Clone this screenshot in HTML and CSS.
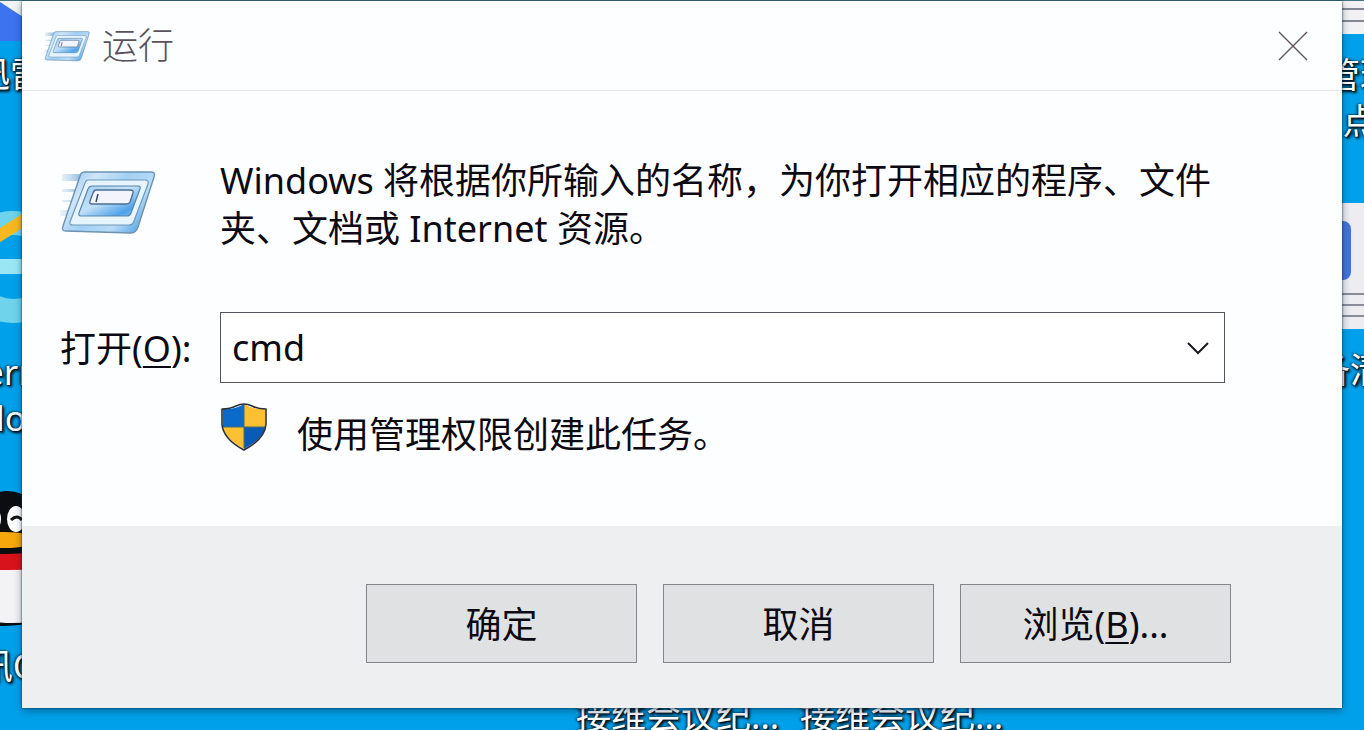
FILE: index.html
```html
<!DOCTYPE html>
<html lang="zh-CN">
<head>
  <meta charset="UTF-8" />
  <meta name="viewport" content="width=device-width, initial-scale=1.0"/>
  <title>运行</title>
  <link rel="stylesheet" href="styles.css">
</head>
<body>
  <!-- shared "run" icon -->
  <svg class="defs" width="0" height="0" aria-hidden="true">
    <defs>
      <linearGradient id="frame" x1="0" y1="0" x2="1" y2="0.6">
        <stop offset="0" stop-color="#86bfea"/>
        <stop offset="0.3" stop-color="#cfe6f9"/>
        <stop offset="0.55" stop-color="#a2d0f4"/>
        <stop offset="0.8" stop-color="#b9dcf7"/>
        <stop offset="1" stop-color="#6bb0e6"/>
      </linearGradient>
      <linearGradient id="screen" x1="0" y1="0" x2="1" y2="1">
        <stop offset="0" stop-color="#9fcdf2"/>
        <stop offset="0.45" stop-color="#c3e1f8"/>
        <stop offset="0.8" stop-color="#4ea2e8"/>
        <stop offset="1" stop-color="#8ac4f2"/>
      </linearGradient>
      <linearGradient id="speed" x1="0" y1="0" x2="1" y2="0">
        <stop offset="0" stop-color="#a9cde6" stop-opacity="0.2"/>
        <stop offset="1" stop-color="#7fb2d8"/>
      </linearGradient>
      <symbol id="run" viewBox="0 0 96 66">
        <path fill="url(#speed)" d="M2 5h22l-3 7H2zM2 20h16l-1 3H2zM2 31h12l-1 2H2zM0 41h10l-2 6H0z"/>
        <path fill="url(#frame)" stroke="#6b93b0" stroke-width="1.4" d="M25 3h66q5 0 3 5L78 58q-2 6-7 6L6 62q-5 0-3-5L20 7q1-4 5-4z"/>
        <path fill="#e6f4fe" stroke="#6f99b8" stroke-width="1.2" d="M28 11h57q4 0 3 4L74 52q-1 4-5 4H13q-4 0-3-3l15-39q1-3 3-3z"/>
        <path fill="url(#screen)" stroke="#5a86a9" stroke-width="1.2" d="M32 17h46q3 0 2 3L71 44q-1 3-4 3H21q-3 0-2-3l9-24q1-3 4-3z"/>
        <path fill="#f3f4fc" stroke="#4c6f92" stroke-width="1.4" d="M36 21h34q4 0 3 3l-3 9q-1 2-4 2H32q-3 0-2-3l3-8q1-3 3-3z"/>
        <path fill="none" stroke="#33415c" stroke-width="1.4" d="M38 25l-2 8"/>
      </symbol>
    </defs>
  </svg>

  <div class="desktop">
    <div class="shortcut xunlei">
      <svg width="60" height="52" viewBox="0 0 60 52" aria-hidden="true"><path fill="#f1f3f4" d="M0 0h60v52H0z"/><path fill="#3d73ee" d="M0 0l20 13 40 26v13H0z"/></svg>
      <span>迅雷</span>
    </div>
    <div class="shortcut ie">
      <svg width="120" height="130" viewBox="0 0 120 130" aria-hidden="true">
        <circle cx="68" cy="66" r="44" fill="none" stroke="#6fd3ec" stroke-width="24"/>
        <path fill="#9be6f5" d="M18 58h90v15H18z"/>
        <path fill="none" stroke="#f9b81f" stroke-width="12" d="M30 50Q62 30 108 0"/>
      </svg>
      <span>Internet<br>Explorer</span>
    </div>
    <div class="shortcut qq">
      <svg width="100" height="140" viewBox="0 0 100 140" aria-hidden="true">
        <ellipse cx="52" cy="46" rx="40" ry="44" fill="#0b0d10"/>
        <path fill="#0b0d10" d="M8 60h88l4 66q-50 22-100 0z"/>
        <path fill="#f3f3f5" d="M16 66h84v62q-44 12-84 0z"/>
        <ellipse cx="37" cy="30" rx="9" ry="13" fill="#fff"/>
        <ellipse cx="61" cy="30" rx="9" ry="13" fill="#fff"/>
        <path fill="none" stroke="#111" stroke-width="3" d="M56 31q6-6 11 0"/>
        <ellipse cx="50" cy="51" rx="30" ry="8" fill="#f6a70c"/>
        <path fill="#d9131b" d="M8 62q42 6 88 0v18q-44 2-88 0z"/>
      </svg>
      <span>腾讯QQ</span>
    </div>
    <div class="shortcut manage">
      <svg width="60" height="33" viewBox="0 0 60 33" aria-hidden="true"><path fill="#f2f2f4" d="M0 0h60v33H0z"/><path stroke="#858991" stroke-width="2" d="M0 8h60M0 20h60"/></svg>
      <span>管理<br>点</span>
    </div>
    <div class="shortcut list">
      <svg width="60" height="126" viewBox="0 0 60 126" aria-hidden="true">
        <path fill="#ececf1" d="M0 0h60v126H0z"/>
        <rect x="-20" y="18" width="51" height="59" rx="8" fill="#4374da"/>
        <path stroke="#8a8d98" stroke-width="2" d="M0 91h60M0 102h60M0 113h60"/>
      </svg>
      <span>设备清单</span>
    </div>
    <div class="shortcut note-one"><span>接维会议纪...</span></div>
    <div class="shortcut note-two"><span>接维会议纪...</span></div>
  </div>

  <form class="dialog" role="dialog" aria-labelledby="title">
    <header class="titlebar">
      <svg class="small-icon" aria-hidden="true"><use href="#run"/></svg>
      <h1 id="title">运行</h1>
      <button type="button" class="close" aria-label="关闭">
        <svg width="30" height="30" viewBox="0 0 30 30" aria-hidden="true"><path stroke="#5c5560" stroke-width="1.4" d="M1 1l28 28M29 1L1 29"/></svg>
      </button>
    </header>

    <main class="content">
      <svg class="large-icon" aria-hidden="true"><use href="#run"/></svg>
      <p>Windows 将根据你所输入的名称，为你打开相应的程序、文件夹、文档或 Internet 资源。</p>

      <label for="command">打开(<u>O</u>):</label>
      <div class="combo">
        <input type="text" id="command" value="cmd">
        <button type="button" aria-label="历史记录">
          <svg width="24" height="14" viewBox="0 0 24 14" aria-hidden="true"><path fill="none" stroke="#1d1a22" stroke-width="2" d="M2 2l10 10L22 2"/></svg>
        </button>
      </div>

      <div class="admin">
        <svg width="46" height="48" viewBox="0 0 46 48" aria-hidden="true">
          <path fill="#0b6bcb" d="M2 6q12 1 21-5v23H2z"/>
          <path fill="#fcc132" d="M23 1q9 6 21 5v18H23z"/>
          <path fill="#fcc132" d="M2 24h21v22Q4 36 2 24z"/>
          <path fill="#0a5bb8" d="M23 24h21q-2 12-21 22z"/>
          <path stroke="#4f6b62" stroke-width="1" d="M23 2v43M2 24h42"/>
          <path fill="none" stroke="#27303a" stroke-width="1.6" stroke-linejoin="round" d="M1 6q8 0 14-3 8-4 16 0 6 3 14 3v15q-1 15-22 26Q2 36 1 21z"/>
        </svg>
        <span>使用管理权限创建此任务。</span>
      </div>
    </main>

    <footer class="actions">
      <button type="submit">确定</button>
      <button type="button">取消</button>
      <button type="button">浏览(<u>B</u>)...</button>
    </footer>
  </form>
</body>
</html>
```

FILE: styles.css
```css
:root {
  --desktop: #00a1ea;
  --window: #fdfeff;
  --footer: #eeeff1;
  --button: #e0e1e2;
  --text: #0c0a12;
  --border: #55525c;
}

* {
  box-sizing: border-box;
}

body {
  margin: 0;
  min-height: 100vh;
  padding: 1px 22px 22px;
  display: flex;
  background: var(--desktop);
  color: var(--text);
  font-family: "Noto Sans", "Noto Sans CJK SC", sans-serif;
  font-size: 36px;
  line-height: 48px;
}

.defs {
  position: absolute;
}

u {
  text-decoration-thickness: 2px;
  text-underline-offset: 4px;
}

/* desktop behind the window */
.desktop {
  position: absolute;
  inset: 0;
  overflow: hidden;
  border-top: 1px solid #44747c;
  color: white;
  font-size: 35px;
  line-height: 46px;
  text-shadow: 2px 2px 3px #00111c, 1px 1px 2px #00111c, -1px 0 3px #00111c;
}

.shortcut {
  position: absolute;
  width: 160px;
  left: -75px;
  text-align: center;
  white-space: nowrap;
}

.shortcut svg {
  display: block;
  margin: 0 auto;
}

.xunlei {
  left: -70px;
  top: -12px;
}

.xunlei svg {
  margin-bottom: 10px;
}

.ie {
  top: 200px;
}

.ie svg {
  margin-bottom: 18px;
}

.qq {
  top: 488px;
}

.qq svg {
  margin-bottom: 14px;
}

.manage {
  left: auto;
  right: -76px;
}

.manage svg {
  margin-bottom: 18px;
}

.list {
  left: auto;
  right: -66px;
  top: 202px;
}

.list svg {
  margin-bottom: 18px;
}

.note-one,
.note-two {
  top: 692px;
  left: 576px;
  text-align: left;
}

.note-two {
  left: 800px;
}

/* window */
.dialog {
  position: relative;
  flex: 1;
  display: flex;
  flex-direction: column;
  background: var(--window);
  box-shadow: 0 0 2px #12303f, 0 3px 8px rgba(0, 30, 60, 0.4);
}

.titlebar {
  display: flex;
  align-items: center;
  gap: 12px;
  height: 90px;
  padding: 0 34px 0 22px;
  border-bottom: 1px solid #e6e9ee;
}

.titlebar h1 {
  margin: 0;
  flex: 1;
  font-size: 36px;
  font-weight: 300;
  color: #57525c;
}

.small-icon {
  width: 46px;
  height: 34px;
}

.close {
  display: flex;
  padding: 0;
  border: none;
  background: none;
}

.content {
  flex: 1;
  display: grid;
  grid-template-columns: 160px 1fr;
  align-content: start;
  padding: 66px 117px 48px 38px;
}

.content p {
  margin: 0;
}

.large-icon {
  width: 96px;
  height: 66px;
  margin-top: 12px;
}

.content label {
  margin-top: 60px;
  line-height: 72px;
}

.combo {
  display: flex;
  margin-top: 59px;
  height: 71px;
  border: 1px solid var(--border);
  background: white;
}

.combo input {
  flex: 1;
  min-width: 0;
  padding: 0 11px;
  border: none;
  outline: none;
  background: none;
  color: inherit;
  font: inherit;
}

.combo button {
  display: flex;
  align-items: center;
  padding: 0 14px;
  border: none;
  background: none;
}

.admin {
  grid-column: 2;
  display: flex;
  gap: 30px;
  margin-top: 18px;
  padding-left: 1px;
}

.admin span {
  padding-top: 8px;
}

.actions {
  display: flex;
  justify-content: flex-end;
  gap: 26px;
  padding: 58px 111px 45px;
  background: var(--footer);
}

.actions button {
  width: 271px;
  height: 79px;
  padding: 3px 0 0;
  border: 1px solid #85868c;
  background: var(--button);
  color: inherit;
  font: inherit;
}
```
